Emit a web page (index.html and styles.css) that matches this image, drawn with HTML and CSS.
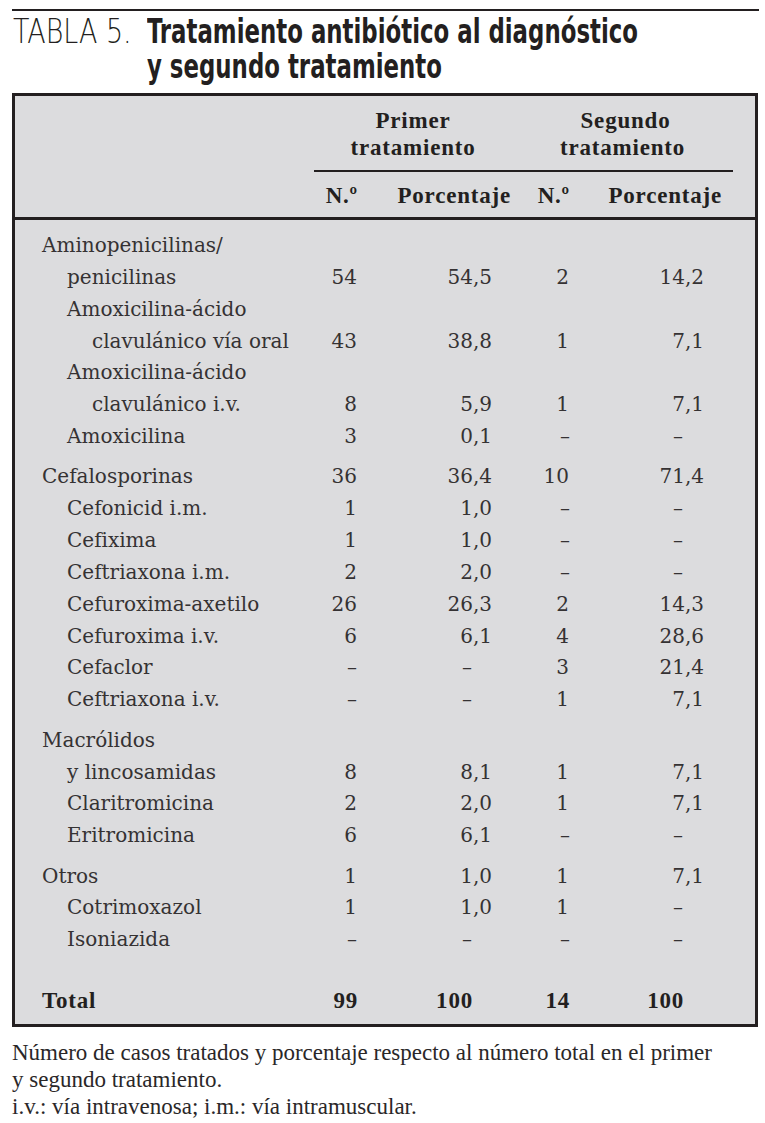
FILE: index.html
```html
<!DOCTYPE html>
<html lang="es">
<head>
<meta charset="utf-8">
<title>Tabla 5</title>
<link rel="stylesheet" href="styles.css">
</head>
<body>
<div class="page">
  <div class="top-rule"></div>
  <h1 class="title">
    <span class="title-label"><span class="tl-inner">TABLA 5.</span></span>
    <span class="title-text"><span class="tt-inner">Tratamiento antibiótico al diagnóstico<br>y segundo tratamiento</span></span>
  </h1>
  <div class="box">
    <table class="data">
      <colgroup>
        <col class="c-label"><col class="c-n1"><col class="c-p1"><col class="c-n2"><col class="c-p2"><col class="c-end">
      </colgroup>
      <thead>
        <tr class="h-group">
          <th></th>
          <th colspan="2" class="grp grp1"><div class="grp-inner">Primer<br>tratamiento</div></th>
          <th colspan="2" class="grp grp2"><div class="grp-inner">Segundo<br>tratamiento</div></th>
          <th></th>
        </tr>
        <tr class="h-cols">
          <th></th>
          <th class="hn">N.º</th>
          <th class="hp1">Porcentaje</th>
          <th class="hn">N.º</th>
          <th class="hp2">Porcentaje</th>
          <th></th>
        </tr>
      </thead>
      <tbody>
        <tr class="first">
          <td class="lab-g">Aminopenicilinas/<br>penicilinas</td>
          <td class="n1">54</td><td class="p1">54,5</td><td class="n2">2</td><td class="p2">14,2</td><td></td>
        </tr>
        <tr>
          <td class="lab-s">Amoxicilina-ácido<br>clavulánico vía oral</td>
          <td class="n1">43</td><td class="p1">38,8</td><td class="n2">1</td><td class="p2">7,1</td><td></td>
        </tr>
        <tr>
          <td class="lab-s">Amoxicilina-ácido<br>clavulánico i.v.</td>
          <td class="n1">8</td><td class="p1">5,9</td><td class="n2">1</td><td class="p2">7,1</td><td></td>
        </tr>
        <tr>
          <td class="lab-s">Amoxicilina</td>
          <td class="n1">3</td><td class="p1">0,1</td><td class="n2 d">–</td><td class="p2 d">–</td><td></td>
        </tr>

        <tr class="gs">
          <td class="lab-g">Cefalosporinas</td>
          <td class="n1">36</td><td class="p1">36,4</td><td class="n2">10</td><td class="p2">71,4</td><td></td>
        </tr>
        <tr>
          <td class="lab-s">Cefonicid i.m.</td>
          <td class="n1">1</td><td class="p1">1,0</td><td class="n2 d">–</td><td class="p2 d">–</td><td></td>
        </tr>
        <tr>
          <td class="lab-s">Cefixima</td>
          <td class="n1">1</td><td class="p1">1,0</td><td class="n2 d">–</td><td class="p2 d">–</td><td></td>
        </tr>
        <tr>
          <td class="lab-s">Ceftriaxona i.m.</td>
          <td class="n1">2</td><td class="p1">2,0</td><td class="n2 d">–</td><td class="p2 d">–</td><td></td>
        </tr>
        <tr>
          <td class="lab-s">Cefuroxima-axetilo</td>
          <td class="n1">26</td><td class="p1">26,3</td><td class="n2">2</td><td class="p2">14,3</td><td></td>
        </tr>
        <tr>
          <td class="lab-s">Cefuroxima i.v.</td>
          <td class="n1">6</td><td class="p1">6,1</td><td class="n2">4</td><td class="p2">28,6</td><td></td>
        </tr>
        <tr>
          <td class="lab-s">Cefaclor</td>
          <td class="n1 d">–</td><td class="p1 d">–</td><td class="n2">3</td><td class="p2">21,4</td><td></td>
        </tr>
        <tr>
          <td class="lab-s">Ceftriaxona i.v.</td>
          <td class="n1 d">–</td><td class="p1 d">–</td><td class="n2">1</td><td class="p2">7,1</td><td></td>
        </tr>

        <tr class="gs">
          <td class="lab-g">Macrólidos<br>y lincosamidas</td>
          <td class="n1">8</td><td class="p1">8,1</td><td class="n2">1</td><td class="p2">7,1</td><td></td>
        </tr>
        <tr>
          <td class="lab-s">Claritromicina</td>
          <td class="n1">2</td><td class="p1">2,0</td><td class="n2">1</td><td class="p2">7,1</td><td></td>
        </tr>
        <tr>
          <td class="lab-s">Eritromicina</td>
          <td class="n1">6</td><td class="p1">6,1</td><td class="n2 d">–</td><td class="p2 d">–</td><td></td>
        </tr>

        <tr class="gs">
          <td class="lab-g">Otros</td>
          <td class="n1">1</td><td class="p1">1,0</td><td class="n2">1</td><td class="p2">7,1</td><td></td>
        </tr>
        <tr>
          <td class="lab-s">Cotrimoxazol</td>
          <td class="n1">1</td><td class="p1">1,0</td><td class="n2">1</td><td class="p2 d">–</td><td></td>
        </tr>
        <tr>
          <td class="lab-s">Isoniazida</td>
          <td class="n1 d">–</td><td class="p1 d">–</td><td class="n2 d">–</td><td class="p2 d">–</td><td></td>
        </tr>

        <tr class="total">
          <td class="t-lab">Total</td>
          <td class="t-n1">99</td><td class="t-p1">100</td><td class="t-n2">14</td><td class="t-p2">100</td><td></td>
        </tr>
      </tbody>
    </table>
  </div>
  <p class="note">Número de casos tratados y porcentaje respecto al número total en el primer<br>y segundo tratamiento.<br>i.v.: vía intravenosa; i.m.: vía intramuscular.</p>
</div>
</body>
</html>
```

FILE: styles.css
```css
* { box-sizing: border-box; }
html, body { margin: 0; padding: 0; background: #ffffff; }
body { width: 765px; min-height: 1123px; color: #231f20; }

.page { padding: 9px 0 0 12px; }

.top-rule { width: 747px; height: 2px; background: #231f20; }

.title {
  margin: 3px 0 0;
  display: flex;
  font-size: 33px;
  line-height: 35px;
  font-weight: 400;
  color: #231f20;
}
.title-label { flex: 0 0 135px; min-width: 0; padding-left: 1px; }
.tl-inner {
  display: inline-block;
  white-space: nowrap;
  font-family: "DejaVu Sans", sans-serif;
  font-weight: 200;
  color: #231f20;
  margin-right: -30px;
  transform: scaleX(0.815);
  transform-origin: 0 0;
}
.title-text { flex: 1 1 auto; min-width: 0; }
.tt-inner {
  display: inline-block;
  white-space: nowrap;
  font-family: "DejaVu Sans Condensed", "DejaVu Sans", sans-serif;
  font-weight: 700;
  margin-right: -145px;
  transform: scaleX(0.77);
  transform-origin: 0 0;
}

.box {
  margin-top: 8px;
  width: 746px;
  border: 3px solid #231f20;
  background: #dcdcde;
}

.data {
  width: 100%;
  border-collapse: separate;
  border-spacing: 0;
  table-layout: fixed;
}
.c-label { width: 299px; }
.c-n1 { width: 46px; }
.c-p1 { width: 152px; }
.c-n2 { width: 60px; }
.c-p2 { width: 161px; }
.c-end { width: 22px; }

.data th {
  font-family: "Liberation Serif", "Times New Roman", serif;
  font-weight: 700;
  font-size: 23px;
  line-height: 27px;
  letter-spacing: 0.8px;
  padding: 0;
  color: #231f20;
}
.h-group th { padding-top: 11px; vertical-align: top; }
.grp { text-align: center; }
.grp-inner { padding-bottom: 9px; border-bottom: 2px solid #231f20; }
.grp2 { padding-left: 28px; }
.grp2 .grp-inner { text-indent: 6px; }

.h-cols th {
  padding-top: 9.5px;
  padding-bottom: 8.5px;
  border-bottom: 3px solid #231f20;
  text-align: right;
}
.h-cols .hn { padding-right: 2px; }
.h-cols .hp1 { padding-right: 1px; }
.h-cols .hp2 { padding-right: 11px; }

.data td {
  font-family: "DejaVu Serif", "Liberation Serif", serif;
  font-size: 20px;
  line-height: 31.85px;
  padding: 0;
  vertical-align: bottom;
  text-align: right;
  color: #353233;
  white-space: nowrap;
}
.data td.lab-g { text-align: left; padding-left: 52px; text-indent: -25px; }
.data td.lab-s { text-align: left; padding-left: 77px; text-indent: -25px; }

.data td.n1 { padding-right: 3px; }
.data td.p1 { padding-right: 20px; }
.data td.n2 { padding-right: 3px; }
.data td.p2 { padding-right: 29px; }
.data td.p1.d { padding-right: 40px; }
.data td.n2.d { padding-right: 2px; }
.data td.p2.d { padding-right: 50px; }

.data tr.first td { padding-top: 10px; }
.data tr.gs td { padding-top: 8.5px; }

.data tr.total td {
  font-family: "Liberation Serif", "Times New Roman", serif;
  font-weight: 700;
  font-size: 23px;
  letter-spacing: 0.8px;
  padding-top: 29px;
  padding-bottom: 7px;
  color: #231f20;
}
.data td.t-lab { text-align: left; padding-left: 27px; }
.data td.t-n1 { padding-right: 2px; }
.data td.t-p1 { padding-right: 39px; }
.data td.t-n2 { padding-right: 2px; }
.data td.t-p2 { padding-right: 49px; }

.note {
  margin: 12.5px 0 0;
  font-family: "Liberation Serif", "Times New Roman", serif;
  font-size: 23px;
  line-height: 27px;
  color: #2a2728;
}
```
